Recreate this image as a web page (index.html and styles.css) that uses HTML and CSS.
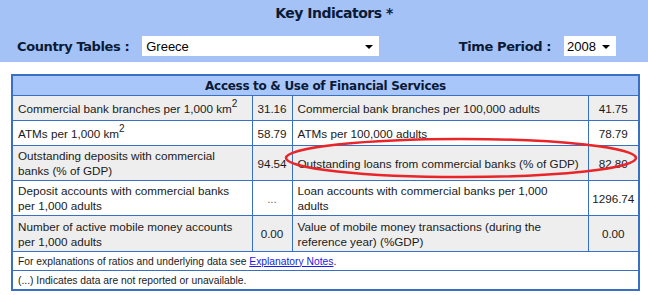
FILE: index.html
```html
<!DOCTYPE html>
<html>
<head>
<meta charset="utf-8">
<link rel="stylesheet" href="styles.css">
</head>
<body>
<div class="band">
  <div class="title">Key Indicators *</div>
  <div class="controls">
    <span class="label">Country Tables :</span>
    <div class="sel sel-country"><span>Greece</span><i class="arrow"></i></div>
    <span class="spacer"></span>
    <span class="label">Time Period :</span>
    <div class="sel sel-year"><span>2008</span><i class="arrow"></i></div>
  </div>
</div>
<div class="wrap">
  <table class="ind">
    <colgroup>
      <col class="c1"><col class="c2"><col class="c3"><col class="c4">
    </colgroup>
    <tr><th colspan="4">Access to &amp; Use of Financial Services</th></tr>
    <tr class="g r1">
      <td class="k1">Commercial bank branches per 1,000 km<sup>2</sup></td><td class="v">31.16</td>
      <td class="k2">Commercial bank branches per 100,000 adults</td><td class="v">41.75</td>
    </tr>
    <tr class="r1">
      <td class="k1">ATMs per 1,000 km<sup>2</sup></td><td class="v">58.79</td>
      <td class="k2">ATMs per 100,000 adults</td><td class="v">78.79</td>
    </tr>
    <tr class="g r2">
      <td class="k1">Outstanding deposits with commercial banks (% of GDP)</td><td class="v">94.54</td>
      <td class="k2">Outstanding loans from commercial banks (% of GDP)</td><td class="v">82.80</td>
    </tr>
    <tr class="r2">
      <td class="k1">Deposit accounts with commercial banks per 1,000 adults</td><td class="v dots">...</td>
      <td class="k2">Loan accounts with commercial banks per 1,000 adults</td><td class="v">1296.74</td>
    </tr>
    <tr class="g r3">
      <td class="k1">Number of active mobile money accounts per 1,000 adults</td><td class="v">0.00</td>
      <td class="k2">Value of mobile money transactions (during the reference year) (%GDP)</td><td class="v">0.00</td>
    </tr>
    <tr class="note"><td colspan="4">For explanations of ratios and underlying data see <a href="#">Explanatory Notes</a>.</td></tr>
    <tr class="note"><td colspan="4">(...) Indicates data are not reported or unavailable.</td></tr>
  </table>
  <svg class="ring" width="370" height="50" viewBox="0 0 370 50">
    <ellipse cx="185" cy="25" rx="175" ry="19" fill="none" stroke="#e8262a" stroke-width="2.5"/>
  </svg>
</div>
</body>
</html>
```
FILE: styles.css
```css
html, body { margin: 0; padding: 0; background: #fff; }
body { width: 648px; height: 295px; overflow: hidden; }

.band {
  background: #a4c2f5;
  height: 62px;
  box-sizing: border-box;
  padding-top: 3px;
  font-family: "DejaVu Sans", Verdana, sans-serif;
  font-weight: bold;
  color: #0b1a36;
}
.title {
  text-align: center;
  font-size: 14px;
  letter-spacing: -0.5px;
  line-height: 20px;
  padding-left: 20px;
}
.controls {
  display: flex;
  align-items: center;
  margin-top: 12px;
  padding-left: 17px;
  height: 22px;
}
.label { font-size: 13px; letter-spacing: -0.4px; }
.spacer { flex: 1; }
.sel {
  background: #fff;
  font-family: "Liberation Sans", Arial, sans-serif;
  font-weight: normal;
  font-size: 13px;
  color: #000;
  display: flex;
  align-items: center;
  height: 20px;
  box-sizing: border-box;
  padding-left: 4px;
}
.sel span { flex: 1; }
.sel-country { width: 237px; margin-left: 13px; }
.sel-year { width: 52px; margin-left: 13px; margin-right: 32px; padding-left: 3px; }
.arrow {
  width: 0; height: 0;
  border-left: 4px solid transparent;
  border-right: 4px solid transparent;
  border-top: 4px solid #000;
  margin-right: 6px;
  margin-top: 2px;
}

.wrap { position: relative; padding: 12px 0 0 11px; }
.ind {
  border-collapse: collapse;
  width: 629px;
  table-layout: fixed;
  border: 2px solid #3a6fc6;
  font-family: "Liberation Sans", Arial, sans-serif;
  font-size: 11.7px;
  color: #1a1a1a;
}
.c1 { width: 240px; }
.c2 { width: 40px; }
.c3 { width: 296px; }
.c4 { width: 51px; }
.ind th {
  background: #a8c6fa;
  font-family: "DejaVu Sans", Verdana, sans-serif;
  font-size: 12px;
  letter-spacing: -0.3px;
  font-weight: bold;
  color: #0b1a36;
  height: 19px;
  padding: 0;
  border: 1px solid #3a6fc6;
}
.ind td {
  border: 1px solid #3a6fc6;
  padding: 0 4px 0 5px;
  line-height: 15px;
  vertical-align: middle;
}
.ind td.k1 { padding-right: 6px; }
.ind td.k2 { padding-right: 8px; }
.ind tr.r1 td { height: 24px; }
.ind tr.r2 td { height: 34px; }
.ind tr.r3 td { height: 35px; }
.ind tr.g td { background: #eeeeee; }
.ind td.v { text-align: center; padding: 0; }
.ind td.dots { color: #666; }
.ind sup { font-size: 10px; line-height: 0; vertical-align: 6px; }
.ind tr.note td {
  font-size: 10.3px;
  height: 18px;
  line-height: 13px;
  padding-left: 5px;
}
.ind a { color: #1a1aee; }
.ring {
  position: absolute;
  left: 276px;
  top: 71px;
  filter: blur(0.4px);
}
```
